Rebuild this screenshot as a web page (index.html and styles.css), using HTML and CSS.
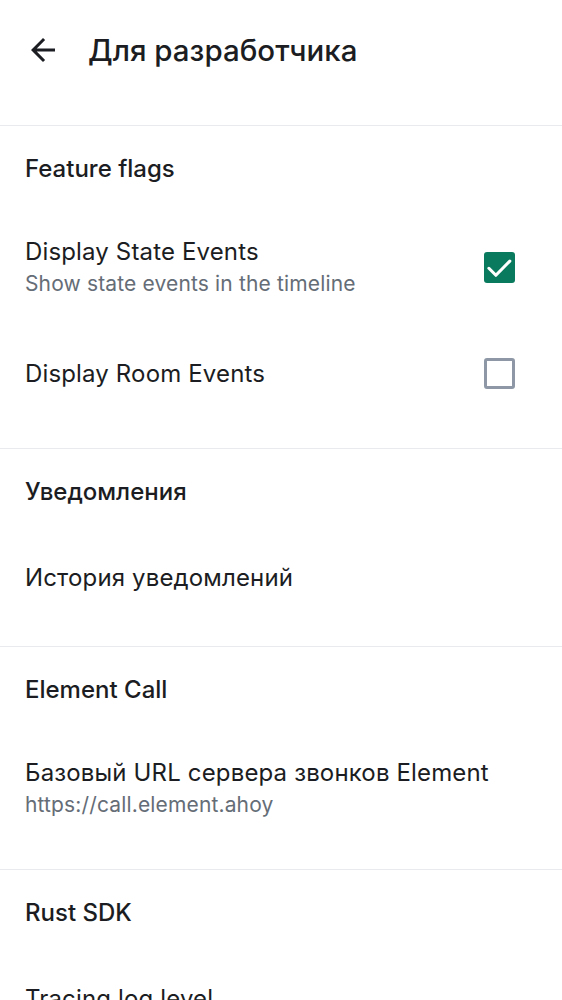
FILE: index.html
```html
<!DOCTYPE html>
<html lang="ru">
<head>
<meta charset="utf-8">
<link rel="stylesheet" href="styles.css">
</head>
<body>
<div class="screen">
  <header class="appbar">
    <svg class="back" viewBox="0 0 24 24" width="36" height="36"><path d="M20 11H7.83l5.59-5.59L12 4l-8 8 8 8 1.41-1.41L7.83 13H20v-2z" fill="#1b1d22"/></svg>
    <h1 class="title">Для разработчика</h1>
  </header>
  <div class="spacer"></div>

  <section class="group">
    <div class="group-title">Feature flags</div>
    <div class="item two">
      <div class="texts">
        <div class="primary">Display State Events</div>
        <div class="secondary">Show state events in the timeline</div>
      </div>
      <div class="check on"><svg viewBox="0 0 24 24" width="31" height="31"><path d="M3.8 12.6l5.4 5.4L20 7" fill="none" stroke="#fff" stroke-width="2.4" stroke-linecap="round" stroke-linejoin="round"/></svg></div>
    </div>
    <div class="item one-tall">
      <div class="texts">
        <div class="primary">Display Room Events</div>
      </div>
      <div class="check off"></div>
    </div>
  </section>

  <section class="group">
    <div class="group-title">Уведомления</div>
    <div class="item one">
      <div class="texts">
        <div class="primary">История уведомлений</div>
      </div>
    </div>
  </section>

  <section class="group">
    <div class="group-title">Element Call</div>
    <div class="item two">
      <div class="texts">
        <div class="primary">Базовый URL сервера звонков Element</div>
        <div class="secondary">https://call.element.ahoy</div>
      </div>
    </div>
  </section>

  <section class="group">
    <div class="group-title">Rust SDK</div>
    <div class="item one">
      <div class="texts">
        <div class="primary">Tracing log level</div>
      </div>
    </div>
  </section>
</div>
</body>
</html>
```

FILE: styles.css
```css
* { box-sizing: border-box; }
html, body { margin: 0; padding: 0; background: #ffffff; }
body {
  font-family: Inter, Roboto, "Noto Sans", sans-serif;
  color: #1b1d22;
  width: 562px;
  height: 1000px;
  overflow: hidden;
}
.screen { display: flex; flex-direction: column; }
.appbar {
  height: 100px;
  flex: none;
  display: flex;
  align-items: center;
  padding-left: 25px;
}
.back { display: block; flex: none; }
.title {
  margin: 0 0 0 27px;
  font-size: 29.5px;
  font-weight: 500;
  letter-spacing: 0;
  color: #1b1d22;
}
.spacer { height: 25px; flex: none; }
.group {
  border-top: 1px solid #e8eaed;
  padding-bottom: 25px;
  flex: none;
}
.group-title {
  height: 85px;
  display: flex;
  align-items: center;
  padding: 0 25px;
  font-size: 24px;
  font-weight: 500;
  color: #1b1d22;
}
.item {
  display: flex;
  align-items: center;
  padding: 0 25px;
}
.item.two { height: 112px; }
.item.one-tall { height: 100px; }
.item.one { height: 87px; }
.texts { flex: 1; display: flex; flex-direction: column; }
.primary { font-size: 24px; line-height: 33px; color: #1b1d22; letter-spacing: 0.15px; }
.secondary { font-size: 21px; line-height: 31px; color: #656d77; letter-spacing: 0.15px; }
.check {
  width: 31px;
  height: 31px;
  border-radius: 3px;
  margin-right: 22px;
  display: flex;
  align-items: center;
  justify-content: center;
  flex: none;
}
.check.on { background: #0a7a5e; }
.check.on svg { display: block; }
.check.off { border: 3px solid #8d97a5; }
```
